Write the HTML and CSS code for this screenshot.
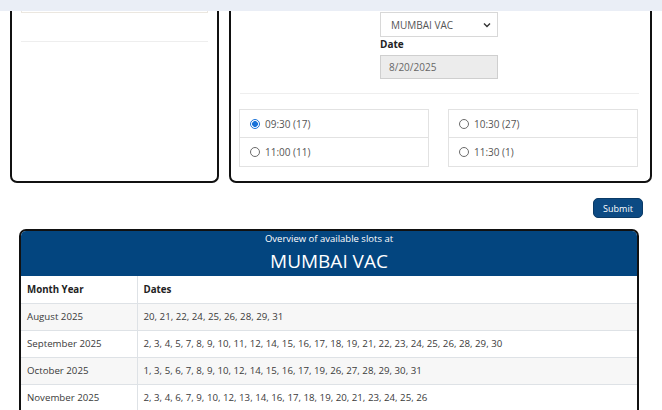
FILE: index.html
```html
<!DOCTYPE html>
<html lang="en">
<head>
<meta charset="utf-8">
<title>Slots</title>
<link rel="stylesheet" href="styles.css">
</head>
<body>
<div class="topbar"></div>
<div class="cards">
  <div class="card card-left">
    <div class="stub"></div>
    <div class="sep"></div>
  </div>
  <div class="card card-right">
    <div class="form">
      <div class="select">
        <span>MUMBAI VAC</span>
        <svg class="chev" width="8" height="6" viewBox="0 0 8 6"><path d="M1 1.5 L4 4.5 L7 1.5" fill="none" stroke="#333" stroke-width="1.4"/></svg>
      </div>
      <div class="label">Date</div>
      <div class="input">8/20/2025</div>
    </div>
    <div class="rule"></div>
    <div class="slots">
      <div class="group">
        <div class="slot"><span class="radio on"></span>09:30 (17)</div>
        <div class="slot"><span class="radio"></span>11:00 (11)</div>
      </div>
      <div class="group">
        <div class="slot"><span class="radio"></span>10:30 (27)</div>
        <div class="slot"><span class="radio"></span>11:30 (1)</div>
      </div>
    </div>
  </div>
</div>
<div class="actions"><button class="submit">Submit</button></div>
<div class="overview">
  <div class="ov-head">
    <div class="ov-sub">Overview of available slots at</div>
    <div class="ov-title">MUMBAI VAC</div>
  </div>
  <table class="ov-table">
    <thead>
      <tr><th class="c1">Month Year</th><th>Dates</th></tr>
    </thead>
    <tbody>
      <tr><td class="c1">August 2025</td><td>20, 21, 22, 24, 25, 26, 28, 29, 31</td></tr>
      <tr><td class="c1">September 2025</td><td>2, 3, 4, 5, 7, 8, 9, 10, 11, 12, 14, 15, 16, 17, 18, 19, 21, 22, 23, 24, 25, 26, 28, 29, 30</td></tr>
      <tr><td class="c1">October 2025</td><td>1, 3, 5, 6, 7, 8, 9, 10, 12, 14, 15, 16, 17, 19, 26, 27, 28, 29, 30, 31</td></tr>
      <tr><td class="c1">November 2025</td><td>2, 3, 4, 6, 7, 9, 10, 12, 13, 14, 16, 17, 18, 19, 20, 21, 23, 24, 25, 26</td></tr>
    </tbody>
  </table>
</div>
</body>
</html>
```
FILE: styles.css
```css
* { box-sizing: border-box; }
html, body { margin: 0; padding: 0; background: #fff; }
body {
  font-family: "Open Sans", "Noto Sans", Arial, sans-serif;
  font-size: 10px;
  color: #333;
  width: 662px;
  height: 410px;
  overflow: hidden;
}
.topbar { height: 11px; background: #eaeef6; }

.cards {
  display: flex;
  gap: 10px;
  padding: 0 10px;
}
.card {
  border: 2px solid #111;
  border-top: none;
  border-radius: 0 0 7px 7px;
  height: 172px;
  flex: none;
}
.card-left { width: 209px; padding: 0 9px; }
.card-right { width: 423px; padding: 1px 13px 0 8px; }

.stub {
  height: 2px;
  border: 1px solid #ebe7e0;
  border-top: none;
}
.sep { height: 1px; background: #eeeeee; margin-top: 28px; }

.form { margin-left: 141px; width: 118px; }
.select {
  height: 25px;
  border: 1px solid #d8d8d8;
  display: flex;
  align-items: center;
  justify-content: space-between;
  padding: 0 6px 0 10px;
  color: #555;
  font-size: 10px;
}
.label {
  font-weight: 700;
  color: #222;
  font-size: 10px;
  line-height: 14px;
  height: 18px;
}
.input {
  height: 24px;
  border: 1px solid #cfcfcf;
  background: #ececec;
  color: #666;
  display: flex;
  align-items: center;
  padding-left: 8px;
}
.rule { height: 1px; background: #eeeeee; margin: 14px 0 0 1px; width: 399px; }

.slots {
  display: grid;
  grid-template-columns: 190px 190px;
  gap: 19px;
  margin-top: 15px;
}
.slot {
  height: 29px;
  border: 1px solid #e2e2e2;
  display: flex;
  align-items: center;
  padding-left: 10px;
  color: #555;
  font-size: 10px;
}
.slot + .slot { border-top: none; }
.radio {
  width: 10px;
  height: 10px;
  border-radius: 50%;
  border: 1px solid #6b6b6b;
  margin-right: 5px;
  flex: none;
}
.radio.on {
  border-color: #1a73d9;
  background: radial-gradient(circle, #1a73d9 0 2.6px, #fff 3.2px);
}

.actions {
  display: flex;
  justify-content: flex-end;
  padding: 15px 19px 0 0;
}
.submit {
  height: 20px;
  width: 50px;
  border: 1px solid #0a3a66;
  border-radius: 5px;
  background: #0c4a83;
  color: #fff;
  font-family: inherit;
  font-size: 9px;
  padding: 0;
}

.overview {
  margin: 11px 0 0 19px;
  width: 620px;
  border: 2px solid #111;
  border-bottom: none;
  border-radius: 7px 7px 0 0;
  overflow: hidden;
}
.ov-head {
  background: #03457f;
  color: #fff;
  text-align: center;
  height: 45px;
}
.ov-sub { font-size: 9.5px; line-height: 14px; padding-top: 1px; }
.ov-title { font-size: 19px; line-height: 28px; padding-top: 1px; }
.ov-table {
  width: 100%;
  border-collapse: collapse;
  font-size: 9.7px;
}
.ov-table th, .ov-table td {
  text-align: left;
  height: 27px;
  padding: 0 6px;
  border-bottom: 1px solid #dee2e6;
  vertical-align: middle;
}
.ov-table th { font-weight: 700; color: #222; }
.ov-table td { color: #3a3a3a; }
.ov-table .c1 { width: 116px; border-right: 1px solid #dee2e6; }
.ov-table tbody tr:nth-child(odd) { background: #f7f7f7; }
```
